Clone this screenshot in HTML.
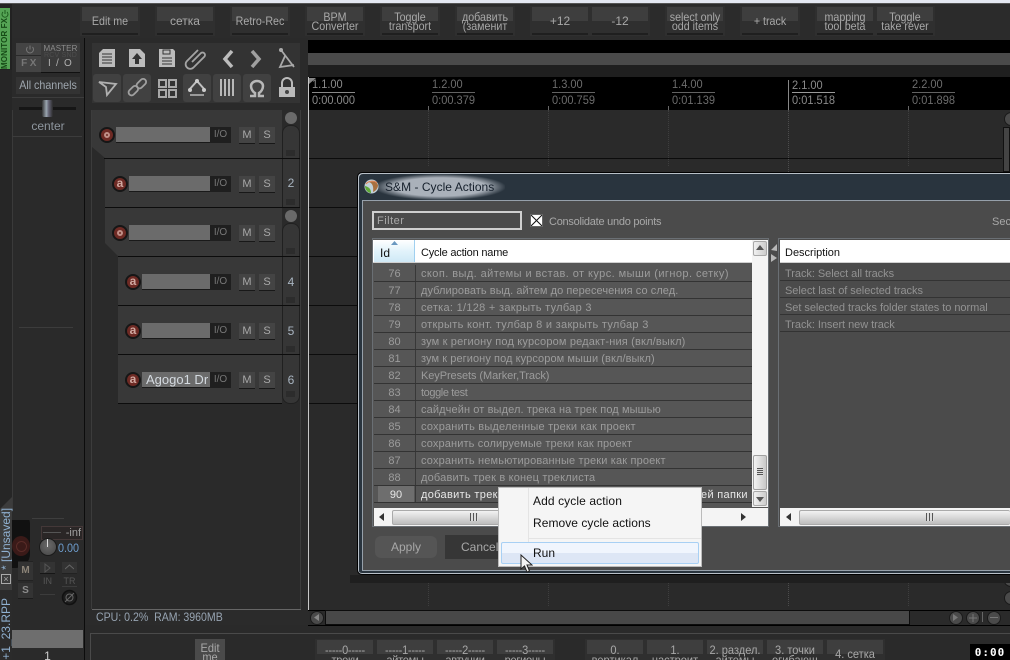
<!DOCTYPE html>
<html><head><meta charset="utf-8">
<style>
html,body{margin:0;padding:0;background:#2b2b2b;}
#p{position:relative;width:1010px;height:660px;overflow:hidden;background:#2b2b2b;font-family:"Liberation Sans","DejaVu Sans",sans-serif;font-size:12px;color:#aaa;}
#p div,#p span.a,#p svg{position:absolute;}
.tb{height:30px;top:6px;width:60px;background:#2f2f2f;}
.tb i{position:absolute;left:2px;right:2px;top:1px;height:14px;background:#3e3e3e;display:block;}
.tb u{position:absolute;left:2px;right:2px;bottom:1px;height:2px;background:#1f1f1f;display:block;}
.tb b{position:absolute;left:-10px;right:-10px;top:7px;text-align:center;font-weight:normal;font-size:12px;line-height:9px;color:#a8a8a8;white-space:nowrap;display:block;transform:scaleX(.89);}
.tb b.o{top:8px;line-height:14px;}
.bb{top:639px;width:60px;height:21px;background:#2f2f2f;}
.bb i{position:absolute;left:2px;right:2px;top:1px;height:14px;background:#3e3e3e;display:block;}
.bb b{position:absolute;left:-10px;right:-10px;top:6px;text-align:center;font-weight:normal;font-size:12px;line-height:10px;color:#a8a8a8;white-space:nowrap;display:block;transform:scaleX(.92);}
.bb b.d{letter-spacing:-.3px;}
.rl{top:77px;height:33px;width:70px;color:#6c6c6c;font-size:12px;line-height:13px;}
.rl .t{left:0;top:1px;transform:scaleX(.92);transform-origin:left;}
.rl .l{left:0;top:15px;width:43px;height:1px;background:#626262;}
.rl .s{left:0;top:17px;transform:scaleX(.92);transform-origin:left;}
.hl{height:1px;background:#0c0c0c;}
.grid{width:0;border-left:1px dotted #3e3e3e;}
.rec{width:16px;height:16px;margin-top:1px;box-sizing:border-box;border-radius:50%;background:#6e2a24;border:2px solid #161616;color:#d0a8a0;font-size:12px;line-height:11px;text-align:center;font-weight:bold;}
.rec.o::after{content:"";position:absolute;left:3px;top:3px;width:6px;height:6px;box-sizing:border-box;border:2px solid #c09088;border-radius:50%;}
.nm{height:15px;background:#6b6b6b;margin-top:1px;border-bottom:1px solid #191919;}
.io{width:21px;height:16px;margin-top:1px;background:#1f1f1f;color:#777;font-size:10px;line-height:16px;text-align:center;}
.ms{width:16px;height:16px;margin-top:1px;background:#444;border-bottom:1px solid #181818;color:#a8a8a8;font-size:11px;line-height:16px;text-align:center;}
.num{width:18px;left:282px;text-align:center;font-size:12px;color:#a8b4c0;}
.row{left:374px;width:378px;height:16px;border-bottom:1px solid #333;background:#565656;font-size:11px;line-height:19px;color:#9c9c9c;white-space:nowrap;overflow:hidden;}
.row .id{left:0;width:41px;text-align:center;border-right:1px solid #383838;height:16px;top:0;}
.row .n{left:47px;top:0;}
.row2{left:780px;width:230px;height:16px;border-bottom:1px solid #333;font-size:11px;line-height:19px;color:#929292;white-space:nowrap;padding-left:5px;box-sizing:border-box;letter-spacing:-.05px;overflow:hidden;}
</style></head><body><div id="p">

<!-- top strip -->
<div style="left:0;top:0;width:1010px;height:3px;background:#e4e8f2"></div>
<div style="left:0;top:3px;width:1010px;height:1px;background:#555"></div>

<!-- top toolbar -->
<div class="tb" style="left:80px"><i></i><u></u><b class="o">Edit me</b></div>
<div class="tb" style="left:155px"><i></i><u></u><b class="o" style="transform:none">сетка</b></div>
<div class="tb" style="left:230px"><i></i><u></u><b class="o">Retro-Rec</b></div>
<div class="tb" style="left:305px"><i></i><u></u><b>BPM<br>Converter</b></div>
<div class="tb" style="left:380px"><i></i><u></u><b>Toggle<br>transport</b></div>
<div class="tb" style="left:455px"><i></i><u></u><b>добавить<br>(заменит</b></div>
<div class="tb" style="left:530px"><i></i><u></u><b class="o" style="transform:none">+12</b></div>
<div class="tb" style="left:590px"><i></i><u></u><b class="o" style="transform:none">-12</b></div>
<div class="tb" style="left:665px"><i></i><u></u><b>select only<br>odd items</b></div>
<div class="tb" style="left:740px"><i></i><u></u><b class="o">+ track</b></div>
<div class="tb" style="left:815px"><i></i><u></u><b>mapping<br>tool beta</b></div>
<div class="tb" style="left:875px"><i></i><u></u><b>Toggle<br>take rever</b></div>

<!-- monitor fx -->
<div style="left:0;top:4px;width:12px;height:66px;background:#222"></div>
<div style="left:0;top:8px;width:10px;height:61px;background:#55a455"></div>
<svg style="left:1px;top:9px" width="8" height="9" viewBox="0 0 8 9"><path d="M2 3a3 3 0 1 0 4 0M4 1v4" fill="none" stroke="#1d5c1d" stroke-width="1"/></svg>
<div style="left:-19px;top:40px;width:48px;height:10px;transform:rotate(-90deg);font-size:8px;line-height:10px;color:#164a16;text-align:left;letter-spacing:.1px;font-weight:bold;white-space:nowrap">MONITOR FX</div>

<!-- master column -->
<div style="left:84px;top:38px;width:1px;height:622px;background:#0c0c0c"></div>
<div style="left:12px;top:38px;width:72px;height:622px;background:#2a2a2a"></div>
<div style="left:12px;top:110px;width:1px;height:400px;background:#3a3a3a"></div>
<div style="left:0;top:70px;width:12px;height:430px;background:#262626"></div>
<div style="left:16px;top:43px;width:28px;height:29px;background:#444"></div>
<div style="left:16px;top:55px;width:28px;height:1px;background:#2a2a2a"></div>
<svg style="left:22px;top:44px" width="16" height="11" viewBox="0 0 16 11"><path d="M5.500 3a3.500 3.500 0 1 0 5 0M8 1.500v4" fill="none" stroke="#777" stroke-width="1"/></svg>
<div style="left:16px;top:57px;width:28px;text-align:center;font-size:10px;line-height:13px;color:#777;font-weight:bold;letter-spacing:2.500px">FX</div>
<div style="left:41px;top:43px;width:39px;height:29px;background:#3a3a3a;border-bottom:1px solid #111"></div>
<div style="left:41px;top:44px;width:39px;text-align:center;font-size:8px;line-height:9px;color:#8c8c8c;letter-spacing:.1px">MASTER</div>
<div style="left:41px;top:52px;width:39px;text-align:center;font-size:7px;line-height:7px;color:#4e4e4e;letter-spacing:.2px">RCV SND</div>
<div style="left:41px;top:58px;width:39px;text-align:center;font-size:10px;line-height:12px;color:#b0b0b0;letter-spacing:1.200px">I / O</div>
<div style="left:16px;top:77px;width:64px;height:17px;background:#333"></div>
<div style="left:8px;top:77px;width:80px;text-align:center;font-size:12px;line-height:17px;color:#9ea6ae;white-space:nowrap;transform:scaleX(.89)">All channels</div>
<div style="left:12px;top:97px;width:72px;height:1px;background:#3c3c3c"></div>
<div style="left:19px;top:107px;width:57px;height:3px;background:#161616"></div>
<div style="left:42px;top:100px;width:11px;height:17px;background:linear-gradient(90deg,#333,#9aa6b0 40%,#667 60%,#2a2a2a);border-radius:2px"></div>
<div style="left:12px;top:119px;width:72px;text-align:center;font-size:12px;line-height:14px;color:#8e969e">center</div>
<div style="left:12px;top:136px;width:70px;height:1px;background:#3c3c3c"></div>
<div style="left:19px;top:327px;width:54px;height:1px;background:#3c3c3c"></div>

<!-- master bottom -->
<div style="left:0;top:497px;width:12px;height:163px;background:#3c3c3c"></div>
<div style="left:0;top:590px;width:12px;height:70px;background:#2b2b2b"></div>
<div style="left:0;top:497px;width:12px;height:12px;background:#262626;clip-path:polygon(0 0,100% 0,0 100%)"></div>
<div style="left:-24px;top:534px;width:60px;height:12px;transform:rotate(-90deg);font-size:12px;line-height:12px;color:#8fb0d0;white-space:nowrap;text-align:left">* [Unsaved]</div>
<div style="left:1px;top:574px;width:8px;height:8px;border:1px solid #aaa;color:#aaa;font-size:9px;line-height:8px;text-align:center">×</div>
<div style="left:-34px;top:632px;width:80px;height:12px;transform:rotate(-90deg);font-size:12px;line-height:12px;color:#8fb0d0;white-space:nowrap;text-align:right">AD+1_23.RPP</div>
<div style="left:12px;top:510px;width:18px;height:58px;background:#111;border-radius:0 14px 14px 0;clip-path:inset(10px 0 0 0)"></div>
<div style="left:12px;top:536px;width:18px;height:20px;background:#3a1a18;border-radius:50%"></div>
<div style="left:16px;top:541px;width:9px;height:9px;border:1px solid #5a2c28;border-radius:50%"></div>
<div style="left:32px;top:518px;width:32px;height:1px;background:#3e3e3e"></div>
<div style="left:41px;top:526px;width:39px;height:12px;background:#2a2626;border:1px solid #443838;color:#a0a0a0;font-size:11px;line-height:12px;text-align:right;padding-right:1px;box-sizing:content-box">-inf</div>
<div style="left:43px;top:532px;width:18px;height:1px;background:#555"></div>
<div style="left:39px;top:538px;width:16px;height:16px;border-radius:50%;background:radial-gradient(circle at 50% 40%,#6a6a6a,#444);border:1px solid #1a1a1a"></div>
<div style="left:47px;top:539px;width:1px;height:8px;background:#ddd"></div>
<div style="left:58px;top:541px;width:24px;font-size:12px;line-height:14px;color:#6d9ccc;white-space:nowrap;transform:scaleX(.9);transform-origin:left;">0.00</div>
<div style="left:18px;top:561px;width:15px;height:18px;background:#333;border-top:1px solid #222;border-bottom:1px solid #222;color:#8c8478;font-size:10px;line-height:18px;text-align:center;font-weight:bold">M</div>
<div style="left:18px;top:583px;width:15px;height:15px;background:#333;border-bottom:1px solid #1c1c1c;color:#8c8c8c;font-size:10px;line-height:16px;text-align:center;font-weight:bold">S</div>
<div style="left:40px;top:562px;width:15px;height:11px;background:#333;border-bottom:1px solid #161616"></div>
<svg style="left:43px;top:563px" width="9" height="10"><path d="M2 1l5 4-5 4z" fill="none" stroke="#555"/></svg>
<div style="left:40px;top:576px;width:15px;text-align:center;font-size:9px;line-height:10px;color:#555">IN</div>
<div style="left:40px;top:594px;width:15px;height:1px;background:#3c3c3c"></div>
<div style="left:62px;top:562px;width:15px;height:11px;background:#333;border-bottom:1px solid #222"></div>
<svg style="left:65px;top:563px" width="9" height="8"><path d="M0 6l4.500-4 4.500 4" fill="none" stroke="#666"/></svg>
<div style="left:62px;top:576px;width:15px;text-align:center;font-size:9px;line-height:10px;color:#555">TR</div>
<div style="left:62px;top:586px;width:15px;height:1px;background:#3c3c3c"></div>
<svg style="left:61px;top:589px" width="17" height="17"><circle cx="8.500" cy="8.500" r="7" fill="#1e1e1e" stroke="#111" stroke-width="1.500"/><circle cx="8.500" cy="8.500" r="3.500" fill="none" stroke="#666"/><path d="M4 13L13 4" stroke="#666"/></svg>
<div style="left:12px;top:630px;width:71px;height:18px;background:#6e6e6e"></div>
<div style="left:12px;top:650px;width:71px;text-align:center;font-size:12px;line-height:12px;color:#ccc">1</div>

<!-- tcp panel frame -->
<div style="left:85px;top:38px;width:223px;height:572px;background:#2a2a2a"></div>
<div style="left:91px;top:110px;width:1px;height:499px;background:#3c3c3c"></div>
<div style="left:300px;top:110px;width:1px;height:499px;background:#3c3c3c"></div>
<div style="left:92px;top:609px;width:209px;height:1px;background:#666"></div>
<div style="left:96px;top:610px;font-size:12px;line-height:15px;color:#97a4b2;white-space:nowrap;transform:scaleX(.88);transform-origin:left">CPU: 0.2%&nbsp; RAM: 3960MB</div>

<!-- tool panel -->
<div style="left:92px;top:43px;width:208px;height:60px;background:#333"></div>
<div style="left:93px;top:74px;width:28px;height:28px;background:#414141;border-radius:3px"></div>
<div style="left:123px;top:74px;width:28px;height:28px;background:#414141;border-radius:3px"></div>
<div style="left:183px;top:74px;width:28px;height:28px;background:#414141;border-radius:3px"></div>
<div style="left:213px;top:74px;width:28px;height:28px;background:#414141;border-radius:3px"></div>
<div style="left:243px;top:74px;width:28px;height:28px;background:#414141;border-radius:3px"></div>
<svg style="left:92px;top:43px" width="208" height="60" viewBox="92 43 208 60">
 <g fill="#bcbcbc">
  <path d="M99 53l4-4h12v18H99z"/><path d="M102 54h10M102 57h10M102 60h10M102 63h10" stroke="#333" stroke-width="1"/>
  <path d="M129 49h11l5 5v13h-16z"/><path d="M137 53l-5 6h3v5h4v-5h3z" fill="#333" />
  <path d="M159 49h14l2 2v16h-16z"/><path d="M163 50h7v4h-7zM162 58h10M162 61h10M162 64h10" fill="none" stroke="#333"/>
 </g>
 <path d="M192 62l9-9a2.500 2.500 0 0 1 3.500 3.500l-11 11a4.500 4.500 0 0 1-6.500-6.500l11-11" fill="none" stroke="#a4a4a4" stroke-width="1.800"/>
 <path d="M232 51l-7 8 7 8" fill="none" stroke="#bcbcbc" stroke-width="3.500"/>
 <path d="M252 51l7 8-7 8" fill="none" stroke="#a0a0a0" stroke-width="3.500"/>
 <path d="M281 50l13 17M285 56l-5 11 14-2" fill="none" stroke="#a8a8a8" stroke-width="1.800"/><circle cx="281" cy="50" r="2" fill="#aaa"/>
 <path d="M99 82l17 2-9 11-1-8z" fill="none" stroke="#b0b0b0" stroke-width="1.800"/>
 <rect x="128" y="88" width="11" height="6" rx="3" transform="rotate(-45 133 91)" fill="none" stroke="#a0a0a0" stroke-width="1.800"/>
 <rect x="136" y="81" width="11" height="6" rx="3" transform="rotate(-45 141 84)" fill="none" stroke="#a0a0a0" stroke-width="1.800"/>
 <g fill="none" stroke="#a8a8a8" stroke-width="2"><rect x="159" y="80" width="7" height="7"/><rect x="169" y="80" width="7" height="7"/><rect x="159" y="90" width="7" height="7"/><rect x="169" y="90" width="7" height="7"/></g>
 <path d="M189 90l8-9 8 9" fill="none" stroke="#c0c0c0" stroke-width="2"/><circle cx="197" cy="81" r="2" fill="#ccc"/><circle cx="190" cy="90" r="2" fill="#ccc"/><circle cx="204" cy="90" r="2" fill="#ccc"/><path d="M190 95h14" stroke="#b8b8b8" stroke-width="1.500"/>
 <path d="M221 79v17M225 79v17M229 79v17M233 79v17" stroke="#b8b8b8" stroke-width="2"/>
 <path d="M250 96h5v-3c-2-1-4-4-4-7 0-3 3-5 6-5s6 2 6 5c0 3-2 6-4 7v3h5" fill="none" stroke="#b8b8b8" stroke-width="2.500"/>
 <path d="M282 87v-4a5 5 0 0 1 10 0v4" fill="none" stroke="#bbb" stroke-width="2"/><rect x="279" y="87" width="16" height="10" fill="#bbb"/><circle cx="287" cy="92" r="2" fill="#444"/>
</svg>

<!-- tracks -->
<div style="left:92px;top:110px;width:190px;height:48px;background:#383838;clip-path:polygon(0 0,100% 0,100% 100%,13px 100%,0 37px)"></div>
<div style="left:105px;top:159px;width:177px;height:48px;background:#383838"></div>
<div style="left:105px;top:208px;width:177px;height:48px;background:#383838;clip-path:polygon(0 0,100% 0,100% 100%,13px 100%,0 35px)"></div>
<div style="left:118px;top:257px;width:164px;height:48px;background:#383838"></div>
<div style="left:118px;top:306px;width:164px;height:48px;background:#383838"></div>
<div style="left:118px;top:355px;width:164px;height:48px;background:#383838"></div>

<!-- track number col -->
<div style="left:291px;top:112px;width:12px;height:12px;border-radius:50%;background:#6a6a6a;margin-left:-6px"></div>
<div style="left:282px;top:125px;width:18px;height:83px;background:#363636;border:1px solid #202020;border-bottom:0;border-radius:8px 8px 0 0;box-sizing:border-box"></div>
<div style="left:291px;top:210px;width:12px;height:12px;border-radius:50%;background:#6a6a6a;margin-left:-6px"></div>
<div style="left:282px;top:223px;width:18px;height:181px;background:#363636;border:1px solid #202020;border-radius:8px;box-sizing:border-box"></div>
<div class="num" style="top:176px">2</div>
<div class="num" style="top:275px">4</div>
<div class="num" style="top:324px">5</div>
<div class="num" style="top:373px">6</div>
<div style="left:286px;top:150px;width:9px;height:6px;background:#2c2c2c"></div>
<div style="left:286px;top:199px;width:9px;height:6px;background:#2c2c2c"></div>
<div style="left:286px;top:248px;width:9px;height:6px;background:#2c2c2c"></div>
<div style="left:286px;top:297px;width:9px;height:6px;background:#2c2c2c"></div>
<div style="left:286px;top:346px;width:9px;height:6px;background:#2c2c2c"></div>
<div style="left:286px;top:391px;width:9px;height:6px;background:#2c2c2c"></div>

<div class="hl" style="left:104px;top:158px;width:196px"></div>
<div class="hl" style="left:105px;top:207px;width:195px"></div>
<div class="hl" style="left:118px;top:256px;width:182px"></div>
<div class="hl" style="left:118px;top:305px;width:182px"></div>
<div class="hl" style="left:118px;top:354px;width:182px"></div>
<div class="hl" style="left:118px;top:403px;width:164px"></div>

<!-- t1 -->
<div class="nm" style="left:116px;top:126px;width:94px"></div><div class="rec o" style="left:99px;top:126px"></div>
<div class="io" style="left:210px;top:126px">I/O</div><div class="ms" style="left:239px;top:126px">M</div><div class="ms" style="left:259px;top:126px">S</div>
<!-- t2 -->
<div class="nm" style="left:129px;top:175px;width:81px"></div><div class="rec" style="left:112px;top:175px">a</div>
<div class="io" style="left:210px;top:175px">I/O</div><div class="ms" style="left:239px;top:175px">M</div><div class="ms" style="left:259px;top:175px">S</div>
<!-- t3 -->
<div class="nm" style="left:129px;top:224px;width:81px"></div><div class="rec o" style="left:112px;top:224px"></div>
<div class="io" style="left:210px;top:224px">I/O</div><div class="ms" style="left:239px;top:224px">M</div><div class="ms" style="left:259px;top:224px">S</div>
<!-- t4 -->
<div class="nm" style="left:142px;top:273px;width:68px"></div><div class="rec" style="left:125px;top:273px">a</div>
<div class="io" style="left:210px;top:273px">I/O</div><div class="ms" style="left:239px;top:273px">M</div><div class="ms" style="left:259px;top:273px">S</div>
<!-- t5 -->
<div class="nm" style="left:142px;top:322px;width:68px"></div><div class="rec" style="left:125px;top:322px">a</div>
<div class="io" style="left:210px;top:322px">I/O</div><div class="ms" style="left:239px;top:322px">M</div><div class="ms" style="left:259px;top:322px">S</div>
<!-- t6 -->
<div class="nm" style="left:142px;top:371px;width:68px;color:#d4dae0;font-size:13px;line-height:15px;overflow:hidden;white-space:nowrap;text-indent:4px">Agogo1 Dr</div><div class="rec" style="left:125px;top:371px">a</div>
<div class="io" style="left:210px;top:371px">I/O</div><div class="ms" style="left:239px;top:371px">M</div><div class="ms" style="left:259px;top:371px">S</div>

<!-- arrange -->
<div style="left:308px;top:40px;width:702px;height:13px;background:#000"></div>
<div style="left:308px;top:53px;width:702px;height:12px;background:#4a4a4a"></div>
<div style="left:308px;top:65px;width:702px;height:12px;background:#1f1f1f"></div>
<div style="left:308px;top:77px;width:702px;height:33px;background:#000"></div>
<div style="left:308px;top:110px;width:702px;height:500px;background:#2a2a2a"></div>
<div style="left:308px;top:77px;width:1px;height:533px;background:#c8c8c8"></div>
<div style="left:309px;top:78px;width:0;height:0;border-top:6px solid #888;border-right:7px solid transparent"></div>

<div class="rl" style="left:312px;color:#8a8a8a"><span class="a t">1.1.00</span><span class="a l" style="background:#888"></span><span class="a s">0:00.000</span></div>
<div class="rl" style="left:432px"><span class="a t">1.2.00</span><span class="a l"></span><span class="a s">0:00.379</span></div>
<div class="rl" style="left:552px"><span class="a t">1.3.00</span><span class="a l"></span><span class="a s">0:00.759</span></div>
<div class="rl" style="left:672px"><span class="a t">1.4.00</span><span class="a l"></span><span class="a s">0:01.139</span></div>
<div class="rl" style="left:792px;color:#8a8a8a"><span class="a t" style="top:2px">2.1.00</span><span class="a l" style="background:#999"></span><span class="a s">0:01.518</span></div>
<div class="rl" style="left:912px"><span class="a t">2.2.00</span><span class="a l"></span><span class="a s">0:01.898</span></div>
<div style="left:428px;top:106px;width:1px;height:4px;background:#666"></div>
<div style="left:548px;top:106px;width:1px;height:4px;background:#666"></div>
<div style="left:668px;top:106px;width:1px;height:4px;background:#666"></div>
<div style="left:788px;top:80px;width:1px;height:30px;background:#888"></div>
<div style="left:908px;top:106px;width:1px;height:4px;background:#666"></div>

<div class="grid" style="left:428px;top:110px;height:56px"></div>
<div class="grid" style="left:548px;top:110px;height:56px"></div>
<div class="grid" style="left:668px;top:110px;height:56px"></div>
<div class="grid" style="left:788px;top:110px;height:62px;border-color:#4c4c4c"></div>
<div class="grid" style="left:908px;top:110px;height:56px"></div>
<div class="grid" style="left:428px;top:582px;height:24px"></div>
<div class="grid" style="left:548px;top:582px;height:24px"></div>
<div class="grid" style="left:668px;top:582px;height:24px"></div>
<div class="grid" style="left:788px;top:575px;height:31px;border-color:#4c4c4c"></div>
<div class="grid" style="left:908px;top:582px;height:24px"></div>

<div class="hl" style="left:309px;top:158px;width:693px"></div>
<div class="hl" style="left:309px;top:207px;width:48px"></div>
<div class="hl" style="left:309px;top:256px;width:48px"></div>
<div class="hl" style="left:309px;top:305px;width:48px"></div>
<div class="hl" style="left:309px;top:354px;width:48px"></div>
<div class="hl" style="left:309px;top:403px;width:48px"></div>

<!-- vertical scrollbar -->
<div style="left:1003px;top:127px;width:7px;height:45px;background:#444;border:1px solid #111;box-sizing:border-box"></div>
<div style="left:1004px;top:112px;width:12px;height:12px;border-radius:50%;background:#4a4a4a;border:1px solid #1a1a1a"></div>
<div style="left:1004px;top:591px;width:12px;height:12px;border-radius:50%;background:#4a4a4a;border:1px solid #1a1a1a"></div>
<div style="left:1004px;top:575px;width:12px;height:10px;border-radius:50%;background:#4a4a4a;border:1px solid #1a1a1a"></div>

<!-- dialog shadow -->
<div style="left:350px;top:575px;width:660px;height:8px;background:#1f1f1f"></div>
<!-- dialog -->
<div style="left:357px;top:172px;width:653px;height:403px;background:#29343e;border:1px solid #000;border-right:0;border-radius:5px 0 0 5px;box-sizing:border-box;box-shadow:inset 1px 1px 0 #b8c0c8,inset 0 -1px 0 #b8c0c8"></div>
<div style="left:375px;top:174px;width:130px;height:26px;background:radial-gradient(ellipse at center,#aab1ba 50%,rgba(42,53,64,0) 72%)"></div>
<svg style="left:364px;top:179px" width="15" height="15" viewBox="0 0 15 15"><circle cx="7.500" cy="7.500" r="7" fill="#c0d0d8"/><path d="M1 7c0 4 3 7 6 7 0-4-2-6-6-7z" fill="#5fa838"/><path d="M5 3c3 1 5 4 4 10 3-1 5-4 5-7-1-3-4-4-9-3z" fill="#a87040"/><path d="M2 5c2-3 8-4 11-1" stroke="#e08050" fill="none"/></svg>
<div style="left:385px;top:180px;font-size:12px;line-height:15px;color:#16202c;letter-spacing:.03px;white-space:nowrap">S&amp;M - Cycle Actions</div>
<div style="left:362px;top:200px;width:648px;height:371px;background:#4b4b4b;border-top:1px solid #96a0aa;border-left:1px solid #96a0aa;border-bottom:1px solid #96a0aa;box-sizing:border-box"></div>

<div style="left:372px;top:211px;width:150px;height:19px;border:2px solid #cfcfcf;box-sizing:border-box;color:#a8a8a8;font-size:11px;line-height:16px;padding-left:3px;letter-spacing:.5px">Filter</div>
<div style="left:530px;top:214px;width:13px;height:13px;background:#fff;border:1px solid #666;box-sizing:border-box"></div>
<svg style="left:531px;top:215px" width="11" height="11"><path d="M0 0l11 11M11 0L0 11" stroke="#111"/></svg>
<div style="left:549px;top:215px;font-size:11px;line-height:14px;color:#a8a8a8;white-space:nowrap;letter-spacing:-.25px">Consolidate undo points</div>
<div style="left:992px;top:215px;font-size:11px;line-height:14px;color:#a8a8a8">Sec</div>

<!-- left list -->
<div style="left:372px;top:238px;width:397px;height:289px;background:#565656;border:1px solid #6a6f74;box-sizing:border-box"></div>
<div style="left:373px;top:240px;width:395px;height:23px;background:#fff;border-bottom:1px solid #d0d0d0;box-sizing:border-box"></div>
<div style="left:374px;top:240px;width:41px;height:22px;background:linear-gradient(#fff,#e2f3fb 50%,#cfe9f6);border-right:1px solid #a0d0f0;box-sizing:border-box"></div>
<div style="left:380px;top:246px;font-size:12px;line-height:14px;color:#111">Id</div>
<svg style="left:391px;top:241px" width="7" height="4"><path d="M0 4l3.500-4 3.500 4z" fill="#6a98c0"/></svg>
<div style="left:421px;top:246px;font-size:11px;line-height:14px;color:#111;white-space:nowrap;letter-spacing:-.2px">Cycle action name</div>

<div class="row" style="top:265px"><span class="a id">76</span><span class="a n" style="letter-spacing:.43px">скоп. выд. айтемы и встав. от курс. мыши (игнор. сетку)</span></div>
<div class="row" style="top:282px"><span class="a id">77</span><span class="a n" style="letter-spacing:.06px">дублировать выд. айтем до пересечения со след.</span></div>
<div class="row" style="top:299px"><span class="a id">78</span><span class="a n" style="letter-spacing:.29px">сетка: 1/128 + закрыть тулбар 3</span></div>
<div class="row" style="top:316px"><span class="a id">79</span><span class="a n" style="letter-spacing:.3px">открыть конт. тулбар 8 и закрыть тулбар 3</span></div>
<div class="row" style="top:333px"><span class="a id">80</span><span class="a n" style="letter-spacing:.17px">зум к региону под курсором редакт-ния (вкл/выкл)</span></div>
<div class="row" style="top:350px"><span class="a id">81</span><span class="a n" style="letter-spacing:.08px">зум к региону под курсором мыши (вкл/выкл)</span></div>
<div class="row" style="top:367px"><span class="a id">82</span><span class="a n" style="letter-spacing:-.08px">KeyPresets (Marker,Track)</span></div>
<div class="row" style="top:384px"><span class="a id">83</span><span class="a n" style="letter-spacing:-.4px">toggle test</span></div>
<div class="row" style="top:401px"><span class="a id">84</span><span class="a n" style="letter-spacing:.11px">сайдчейн от выдел. трека на трек под мышью</span></div>
<div class="row" style="top:418px"><span class="a id">85</span><span class="a n" style="letter-spacing:.19px">сохранить выделенные треки как проект</span></div>
<div class="row" style="top:435px"><span class="a id">86</span><span class="a n" style="letter-spacing:.13px">сохранить солируемые треки как проект</span></div>
<div class="row" style="top:452px"><span class="a id">87</span><span class="a n" style="letter-spacing:.16px">сохранить немьютированные треки как проект</span></div>
<div class="row" style="top:469px"><span class="a id">88</span><span class="a n" style="letter-spacing:.19px">добавить трек в конец треклиста</span></div>
<div class="row" style="top:486px;color:#e8e8e8"><span class="a" style="left:4px;top:0;width:36px;height:16px;background:#6e6e6e;text-align:center">90</span><span class="a" style="left:41px;top:0;width:1px;height:16px;background:#383838"></span><span class="a n" style="letter-spacing:.32px">добавить трек</span><span class="a" style="left:327px;top:0;letter-spacing:.32px">ей папки</span></div>

<!-- v scroll left -->
<div style="left:752px;top:240px;width:16px;height:267px;background:#f4f4f4"></div>
<div style="left:753px;top:241px;width:14px;height:15px;background:linear-gradient(90deg,#f0f0f0,#ccc);border:1px solid #a8a8a8;box-sizing:border-box;border-radius:2px"></div>
<svg style="left:756px;top:245px" width="8" height="5"><path d="M0 5l4-5 4 5z" fill="#555"/></svg>
<div style="left:753px;top:455px;width:14px;height:35px;background:linear-gradient(90deg,#f4f4f4,#c8c8c8);border:1px solid #a0a0a0;box-sizing:border-box;border-radius:2px"></div>
<div style="left:757px;top:468px;width:6px;height:8px;background:repeating-linear-gradient(#555 0 1px,#ddd 1px 2px)"></div>
<div style="left:753px;top:491px;width:14px;height:15px;background:linear-gradient(90deg,#f0f0f0,#ccc);border:1px solid #a8a8a8;box-sizing:border-box;border-radius:2px"></div>
<svg style="left:756px;top:497px" width="8" height="5"><path d="M0 0l4 5 4-5z" fill="#555"/></svg>
<!-- h scroll left -->
<div style="left:374px;top:508px;width:394px;height:18px;background:#f4f4f4"></div>
<svg style="left:379px;top:513px" width="5" height="8"><path d="M5 0L0 4l5 4z" fill="#333"/></svg>
<div style="left:392px;top:510px;width:110px;height:15px;background:linear-gradient(#f2f2f2,#bdbdbd);border:1px solid #aaa;box-sizing:border-box;border-radius:2px"></div>
<div style="left:470px;top:513px;width:8px;height:8px;background:repeating-linear-gradient(90deg,#555 0 1px,#ddd 1px 3px)"></div>
<svg style="left:741px;top:513px" width="5" height="8"><path d="M0 0l5 4-5 4z" fill="#333"/></svg>

<!-- splitter arrows -->
<svg style="left:771px;top:244px" width="6" height="18"><path d="M6 0L0 6l6 1zM0 10l6 4-6 4z" fill="#b8b8b8"/></svg>

<!-- right list -->
<div style="left:778px;top:238px;width:232px;height:289px;background:#4b4b4b;border:1px solid #6a6f74;border-right:0;box-sizing:border-box"></div>
<div style="left:780px;top:240px;width:230px;height:23px;background:#fff;border-bottom:1px solid #d0d0d0;box-sizing:border-box"></div>
<div style="left:785px;top:246px;font-size:11px;line-height:14px;color:#111">Description</div>
<div class="row2" style="top:265px">Track: Select all tracks</div>
<div class="row2" style="top:282px">Select last of selected tracks</div>
<div class="row2" style="top:299px">Set selected tracks folder states to normal</div>
<div class="row2" style="top:316px">Track: Insert new track</div>
<div style="left:780px;top:508px;width:230px;height:18px;background:#f4f4f4"></div>
<svg style="left:786px;top:513px" width="5" height="8"><path d="M5 0L0 4l5 4z" fill="#333"/></svg>
<div style="left:799px;top:510px;width:211px;height:15px;background:linear-gradient(#f2f2f2,#bdbdbd);border:1px solid #aaa;border-right:0;box-sizing:border-box;border-radius:2px"></div>
<div style="left:926px;top:513px;width:8px;height:8px;background:repeating-linear-gradient(90deg,#555 0 1px,#ddd 1px 3px)"></div>

<!-- dialog buttons -->
<div style="left:375px;top:536px;width:62px;height:22px;background:#555;border-radius:6px;color:#a8a8a8;font-size:12px;line-height:22px;text-align:center">Apply</div>
<div style="left:445px;top:535px;width:60px;height:24px;background:#363636;color:#a8a8a8;font-size:12px;line-height:24px;padding-left:16px;box-sizing:border-box">Cancel</div>

<!-- context menu -->
<div style="left:498px;top:487px;width:204px;height:80px;background:#f5f5f5;border:1px solid #bbb;box-sizing:border-box"></div>
<div style="left:528px;top:488px;width:1px;height:78px;background:#e4e4e4"></div>
<div style="left:529px;top:538px;width:172px;height:1px;background:#e4e4e4"></div>
<div style="left:533px;top:494px;font-size:12px;line-height:14px;color:#111;white-space:nowrap;letter-spacing:.1px">Add cycle action</div>
<div style="left:533px;top:516px;font-size:12px;line-height:14px;color:#111;white-space:nowrap;letter-spacing:.05px">Remove cycle actions</div>
<div style="left:501px;top:542px;width:198px;height:22px;background:linear-gradient(#f0f5fd 50%,#dde6f5 50%);border:1px solid #a8d0f4;box-sizing:border-box;border-radius:2px"></div>
<div style="left:533px;top:546px;font-size:12px;line-height:14px;color:#111">Run</div>
<svg style="left:520px;top:554px" width="13" height="19" viewBox="0 0 13 19"><path d="M1 1v14l3.500-3 2.500 6 2.500-1-2.500-6h5z" fill="#f4f4f4" stroke="#222"/></svg>

<!-- h scrollbar bottom -->
<div style="left:308px;top:610px;width:702px;height:1px;background:#000"></div>
<div style="left:309px;top:611px;width:701px;height:14px;background:#2a2a2a"></div>
<div style="left:325px;top:610px;width:585px;height:15px;background:#484848;border:1px solid #0c0c0c;box-sizing:border-box"></div>
<div style="left:310px;top:611px;width:12px;height:12px;border-radius:50%;background:#4a4a4a;border:1px solid #1a1a1a"></div>
<svg style="left:313px;top:614px" width="7" height="7"><path d="M6 0L1 3.500 6 7z" fill="#888"/></svg>
<div style="left:949px;top:611px;width:12px;height:12px;border-radius:50%;background:#4a4a4a;border:1px solid #1a1a1a"></div>
<svg style="left:952px;top:614px" width="7" height="7"><path d="M1 0l5 3.500L1 7z" fill="#777"/></svg>
<div style="left:966px;top:611px;width:12px;height:12px;border-radius:50%;background:#4a4a4a;border:1px solid #1a1a1a"></div>
<svg style="left:969px;top:614px" width="8" height="8"><path d="M4 0v8M0 4h8" stroke="#777"/></svg>
<div style="left:982px;top:612px;width:1px;height:10px;background:#666"></div>
<div style="left:987px;top:611px;width:12px;height:12px;border-radius:50%;background:#4a4a4a;border:1px solid #1a1a1a"></div>
<div style="left:990px;top:617px;width:8px;height:1px;background:#777"></div>

<!-- bottom -->
<div style="left:85px;top:625px;width:925px;height:35px;background:#2a2a2a"></div>
<div style="left:90px;top:633px;width:920px;height:1px;background:#4a4a4a"></div>
<div style="left:90px;top:633px;width:1px;height:27px;background:#4a4a4a"></div>
<div style="left:308px;top:625px;width:702px;height:1px;background:#000"></div>

<div class="bb" style="left:195px;width:30px;background:#4a4a4a"><i style="background:#4a4a4a"></i><b style="top:5px;line-height:9px">Edit<br>me</b></div>
<div class="bb" style="left:315px"><i></i><b class="d">-----0-----<br>треки</b></div>
<div class="bb" style="left:375px"><i></i><b class="d">-----1-----<br>айтемы</b></div>
<div class="bb" style="left:435px"><i></i><b class="d">-----2-----<br>автуции</b></div>
<div class="bb" style="left:495px"><i></i><b class="d">-----3-----<br>регионы</b></div>
<div class="bb" style="left:585px"><i></i><b>0.<br>вертикал</b></div>
<div class="bb" style="left:645px"><i></i><b>1.<br>настроит</b></div>
<div class="bb" style="left:705px"><i></i><b>2. раздел.<br>айтемы</b></div>
<div class="bb" style="left:765px"><i></i><b>3. точки<br>огибающ</b></div>
<div class="bb" style="left:825px"><i></i><b style="top:10px">4. сетка</b></div>

<div style="left:970px;top:644px;width:40px;height:16px;background:#000;color:#fff;font-family:'DejaVu Sans Mono','Liberation Mono',monospace;font-weight:bold;font-size:11px;line-height:17px;text-align:center;letter-spacing:1px">0:00</div>

</div></body></html>
